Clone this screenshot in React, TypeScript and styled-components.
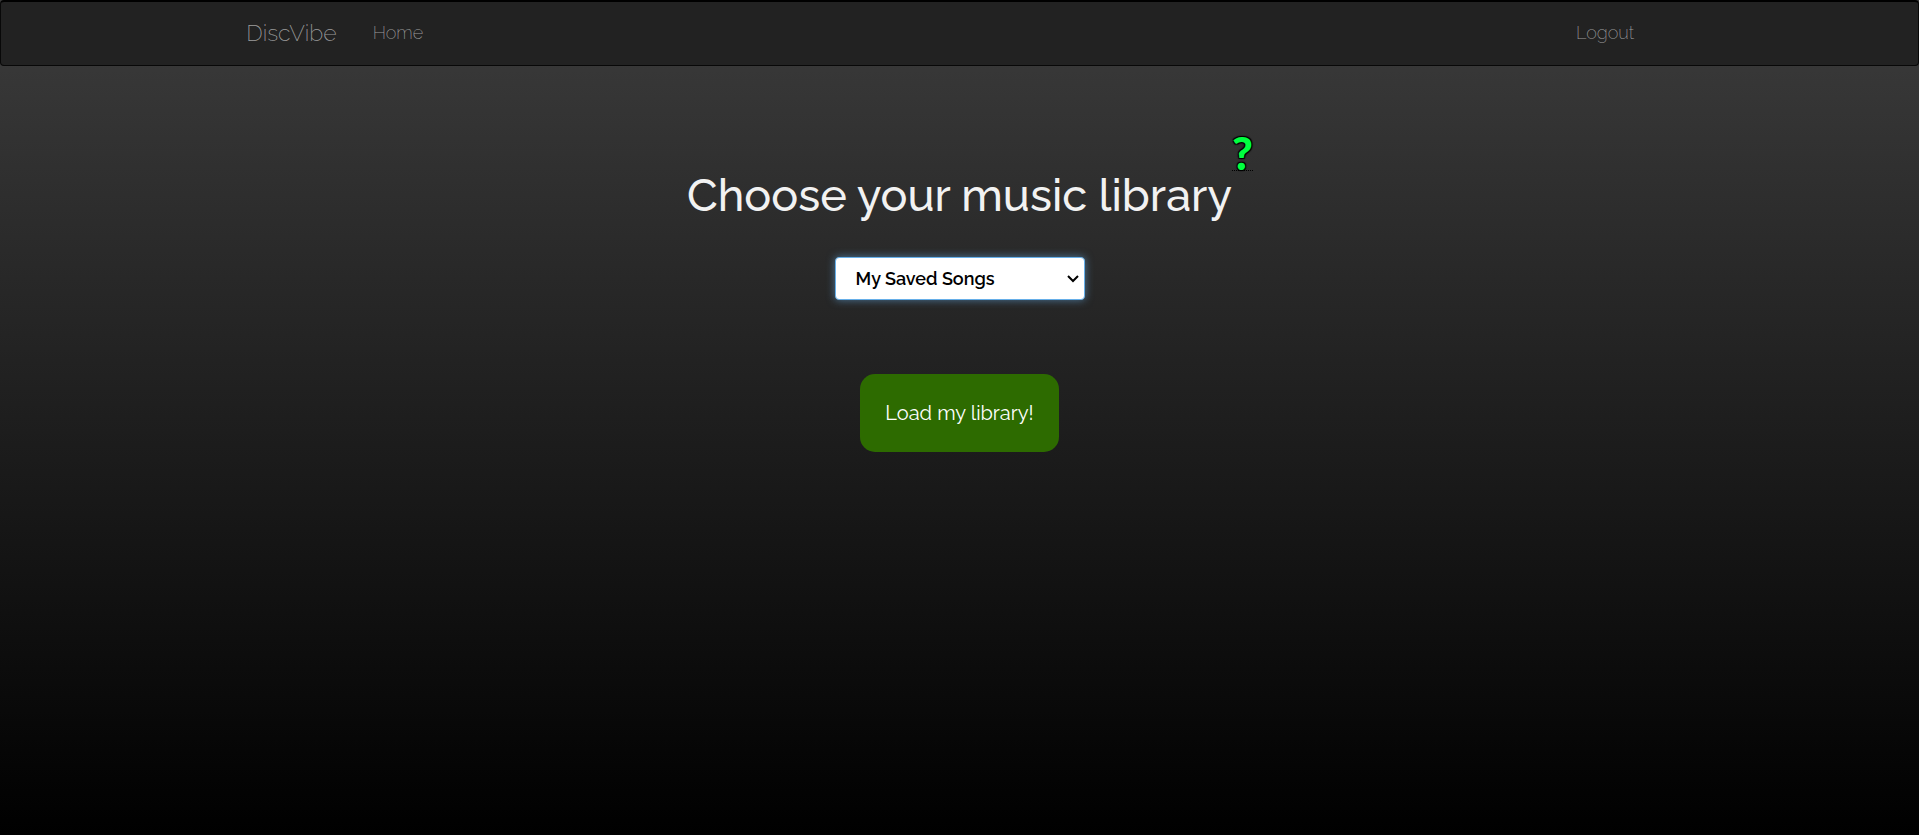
import React from 'react';
import styled, { createGlobalStyle } from 'styled-components';

const GlobalStyle = createGlobalStyle`
  * { box-sizing: border-box; }
  html { min-height: 100%; background: #000; }
  body {
    margin: 0;
    min-height: 100vh;
    background: linear-gradient(#3c3c3c, #000) no-repeat;
    color: #f2f2f2;
    font-family: Raleway, Lato, sans-serif;
  }
`;

const Navbar = styled.nav`
  display: flex;
  align-items: center;
  height: 66px;
  padding: 0 14% 2px 12%;
  border: 1px solid #080808;
  border-top: 2px solid #000;
  border-radius: 4px;
  background: #222;
`;

const NavLink = styled.a<{ $brand?: boolean; $end?: boolean }>`
  padding: 15px;
  margin-left: ${(p) => (p.$end ? 'auto' : p.$brand ? '0' : '6px')};
  color: #9d9d9d;
  font-size: ${(p) => (p.$brand ? '23px' : '18px')};
  font-weight: 200;
  line-height: 32px;
  text-decoration: none;
`;

const Main = styled.main`
  display: flex;
  flex-direction: column;
  align-items: center;
  padding-top: 100px;
`;

const Heading = styled.h1`
  position: relative;
  margin: 0;
  font-size: 45px;
  font-weight: 500;
  line-height: 60px;
`;

const Help = styled.abbr`
  position: absolute;
  bottom: 55px;
  left: 100%;
  border-bottom: 1px dotted #000;
  color: #00ff40;
  font-family: Lato, sans-serif;
  font-size: 45px;
  font-weight: 900;
  line-height: 34px;
  text-decoration: none;
  text-shadow: -1px -1px 1px #000, 1px -1px 1px #000, -1px 1px 1px #000, 1px 1px 1px #000;
  cursor: help;
`;

const SelectBox = styled.div`
  position: relative;
  width: 250px;
  margin-top: 31px;
`;

const LibrarySelect = styled.select`
  display: block;
  appearance: none;
  width: 100%;
  height: 43px;
  padding: 0 20px;
  border: 1px solid #66afe9;
  border-radius: 4px;
  outline: 0;
  background: #fff;
  box-shadow: 0 0 8px rgba(102, 175, 233, 0.6);
  color: #000;
  font: 600 18px Raleway, Lato, sans-serif;
`;

const Chevron = styled.svg`
  position: absolute;
  top: 17px;
  right: 5px;
  width: 14px;
  height: 10px;
  pointer-events: none;
`;

const LoadButton = styled.button`
  height: 78px;
  margin-top: 74px;
  padding: 0 25px;
  border: 0;
  border-radius: 15px;
  background: #2d6b00;
  color: #fff;
  font: 400 20px Raleway, Lato, sans-serif;
`;

export default function App() {
  return (
    <>
      <GlobalStyle />
      <Navbar>
        <NavLink href="#" $brand>DiscVibe</NavLink>
        <NavLink href="#home">Home</NavLink>
        <NavLink href="#logout" $end>Logout</NavLink>
      </Navbar>
      <Main>
        <Heading>
          <label htmlFor="library">Choose your music library</label>
          <Help>?</Help>
        </Heading>
        <SelectBox>
          <LibrarySelect id="library">
            <option>My Saved Songs</option>
          </LibrarySelect>
          <Chevron viewBox="0 0 14 10" aria-hidden="true">
            <path d="M2 2l5 5 5-5" fill="none" stroke="#000" strokeWidth="2" />
          </Chevron>
        </SelectBox>
        <LoadButton type="button">Load my library!</LoadButton>
      </Main>
    </>
  );
}
